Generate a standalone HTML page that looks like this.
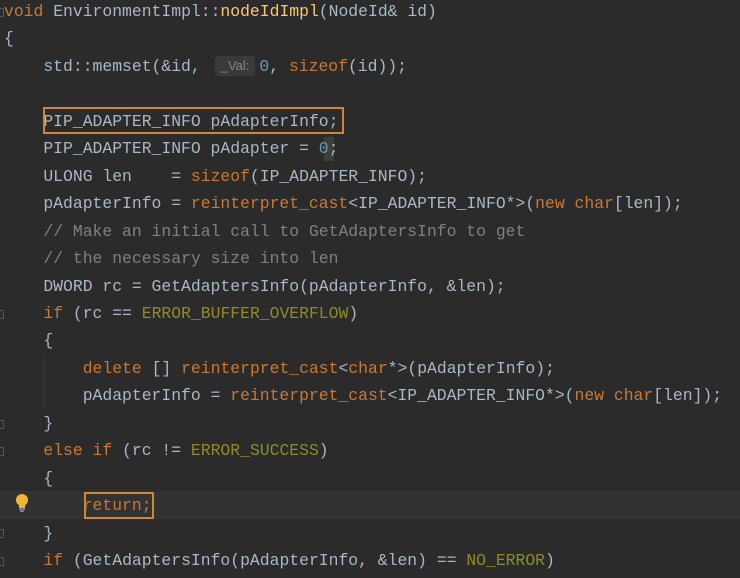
<!DOCTYPE html>
<html><head><meta charset="utf-8"><style>
html,body{margin:0;padding:0;background:#2b2b2b;width:740px;height:578px;overflow:hidden}
#c{position:absolute;left:4px;top:-2px;font-family:"Liberation Mono",monospace;font-size:16.4px;line-height:27.45px;color:#a9b7c6;white-space:pre}
.k{color:#cc7832}.f{color:#ffc66d}.m{color:#908b25}.n{color:#6897bb}.c{color:#808080}
.cur{position:absolute;left:0;top:491px;width:740px;height:28px;background:#323232}
.box{position:absolute;border:2px solid #cf8636;box-sizing:border-box;z-index:2}
.hint{display:inline-block;background:#3a3a3a;color:#878787;font-family:"Liberation Sans",sans-serif;font-size:13px;line-height:20px;padding:0 6px;border-radius:3px;margin:0 4px 0 14px;vertical-align:1px}
.fold{position:absolute;left:0;width:4px;height:9px;border:1px solid #555;border-left:none;box-sizing:border-box}
.guide{position:absolute;left:43px;width:1px;background:#393939}
</style></head><body>
<div class="cur"></div>
<div class="guide" style="top:355px;height:54px"></div>
<div class="box" style="left:43px;top:107px;width:301px;height:27px"></div>
<div class="box" style="left:84px;top:492px;width:70px;height:27px"></div>
<div style="position:absolute;left:324px;top:137px;width:10px;height:24px;background:#3f3f35"></div>
<div class="fold" style="top:8px"></div>
<div class="fold" style="top:310px"></div>
<div class="fold" style="top:420px"></div>
<div class="fold" style="top:447px"></div>
<div class="fold" style="top:529px"></div>
<div class="fold" style="top:557px"></div>
<svg style="position:absolute;left:14px;top:493px" width="16" height="20" viewBox="0 0 16 20"><circle cx="8" cy="7" r="6" fill="#f4b632"/><rect x="5" y="12" width="6" height="3" fill="#f4b632"/><rect x="5" y="15.5" width="6" height="1.2" fill="#aaa"/><rect x="6" y="17.5" width="4" height="1.2" fill="#aaa"/></svg>
<div id="c"><span class="k">void</span> EnvironmentImpl::<span class="f">nodeIdImpl</span>(NodeId&amp; id)
{
    std::memset(&amp;id,<span class="hint">_Val:</span><span class="n">0</span>, <span class="k">sizeof</span>(id));

    PIP_ADAPTER_INFO pAdapterInfo;
    PIP_ADAPTER_INFO pAdapter = <span class="n">0</span>;
    ULONG len    = <span class="k">sizeof</span>(IP_ADAPTER_INFO);
    pAdapterInfo = <span class="k">reinterpret_cast</span>&lt;IP_ADAPTER_INFO*&gt;(<span class="k">new char</span>[len]);
    <span class="c">// Make an initial call to GetAdaptersInfo to get</span>
    <span class="c">// the necessary size into len</span>
    DWORD rc = GetAdaptersInfo(pAdapterInfo, &amp;len);
    <span class="k">if</span> (rc == <span class="m">ERROR_BUFFER_OVERFLOW</span>)
    {
        <span class="k">delete</span> [] <span class="k">reinterpret_cast</span>&lt;<span class="k">char</span>*&gt;(pAdapterInfo);
        pAdapterInfo = <span class="k">reinterpret_cast</span>&lt;IP_ADAPTER_INFO*&gt;(<span class="k">new char</span>[len]);
    }
    <span class="k">else if</span> (rc != <span class="m">ERROR_SUCCESS</span>)
    {
        <span class="k">return;</span>
    }
    <span class="k">if</span> (GetAdaptersInfo(pAdapterInfo, &amp;len) == <span class="m">NO_ERROR</span>)
</div>
</body></html>
